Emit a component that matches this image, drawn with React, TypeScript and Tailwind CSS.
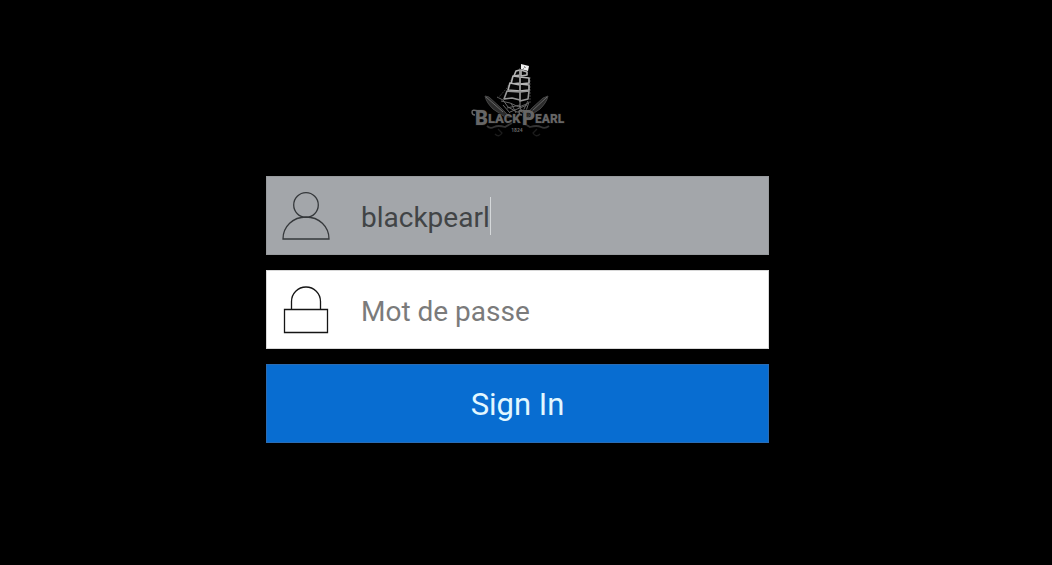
import { useState } from "react";

function Logo() {
  return (
    <svg viewBox="0 0 120 90" className="h-[90px] w-[120px]" role="img" aria-label="Black Pearl">
      {/* crossed sabres */}
      <g stroke="#505050" fill="#2c2c2c" strokeWidth="0.8">
        <path d="M27 41c1 5 4 9 8 13l12 8h5l-9-9-12-11z" />
        <path d="M90 41c-1 5-4 9-8 13l-12 8h-5l9-9 11-10z" />
        <path d="M28 42l17 15M89 42L73 57" stroke="#777" />
      </g>
      <g fill="none" stroke="#333" strokeWidth="1.8">
        <path d="M29 71q3 3 7 1t11 0l7-4M91 71q-4 3-8 1t-11 0l-7-4" />
        <path d="M37 79q4 4 7-1l-4-4M82 79q-4 4-7-1l4-4" stroke="#1c1c1c" strokeWidth="1.4" />
      </g>
      {/* hull and rigging */}
      <g fill="none" stroke="#666" strokeWidth="1">
        <path d="M39 42l6 3 5 7 9 5 9-1 3-9M43 46l9 2 9 4 10-4M45 50l7 8M53 48l5 10M61 51l4 7M70 46l-6 12M49 53l13-3M52 57l17-7" />
        <path d="M40 43l9-10 6-12 8-9M72 22v26" stroke="#3f3f3f" strokeDasharray="2 1" />
      </g>
      {/* sails */}
      <g fill="#060606" stroke="#b4b4b4" strokeWidth="1.6" strokeLinejoin="round">
        <path d="M58 16l4-1v5l-6 1zM63 15l6 2v3l-6 1z" />
        <path d="M55 21l7 1v6l-9 1zM62 22l9 1v5l-9 1z" />
        <path d="M52 28l10 2v6l-12-1zM62 29l9 1v5l-9 1z" />
        <path d="M49 36l13 1v8l-8-2-8 1zM62 37l9-1-1 8-8 2z" stroke="#969696" />
      </g>
      <path d="M63 9l8 2-1 5-7-2z" fill="#eee" />
      <path d="M66 11l2 2M65 14l2-2" stroke="#777" strokeWidth="0.7" />
      <path d="M62 14v38" stroke="#8a8a8a" strokeWidth="1" />
      {/* lettering */}
      <g
        className="font-['Roboto',sans-serif] font-black"
        fill="#666"
        stroke="#101010"
        strokeWidth="1"
        paintOrder="stroke"
      >
        <text x="17" y="70" fontSize="20">
          B<tspan fontSize="13" dy="-2">LACK</tspan>
        </text>
        <text x="64" y="70" fontSize="20">
          P<tspan fontSize="12" dy="-2">EARL</tspan>
        </text>
      </g>
      <path d="M20 56q-6-2-6 1t3 3M66 56q-5-2-5 1t3 3" fill="none" stroke="#666" strokeWidth="1.4" />
      <text x="59" y="77" fontSize="5" textAnchor="middle" fill="#666" className="font-['Roboto',sans-serif] font-bold">
        1824
      </text>
    </svg>
  );
}

function UserIcon() {
  return (
    <svg viewBox="0 0 48 48" className="size-12 shrink-0" fill="none" stroke="#35383b" strokeWidth="1.3" aria-hidden="true">
      <circle cx="24" cy="13" r="12.300" />
      <path d="M1 47C1 34.500 11 25 24 25S47 34.500 47 47z" />
    </svg>
  );
}

function LockIcon() {
  return (
    <svg viewBox="0 0 48 48" className="size-12 shrink-0" fill="none" stroke="#151515" strokeWidth="1.3" aria-hidden="true">
      <path d="M9.500 23.500V15.500a14.500 14.500 0 0 1 29 0v8" />
      <path d="M2.500 23.500h43v23h-43z" />
    </svg>
  );
}

export default function App() {
  const [user, setUser] = useState("blackpearl");
  const [password, setPassword] = useState("");

  return (
    <main className="flex min-h-screen flex-col items-center bg-black pt-[55px] pr-[17px] pb-8 font-['Roboto',sans-serif]">
      <Logo />
      <form className="mt-[31px] flex w-full max-w-[503px] flex-col gap-[15px]" onSubmit={(e) => e.preventDefault()}>
        <label className="flex h-[79px] items-center border border-[#989b9e] bg-[#a3a6aa] pl-[15px]">
          <UserIcon />
          <input
            aria-label="Username"
            className="ml-[31px] field-sizing-content min-w-0 bg-transparent pt-1 text-[28px] text-[#414446] caret-transparent outline-none"
            value={user}
            onChange={(e) => setUser(e.target.value)}
          />
          <span className="h-[38px] w-px bg-[#d5d8da]" aria-hidden="true" />
        </label>
        <label className="flex h-[79px] items-center border border-[#d8d8d8] bg-white pl-[15px]">
          <LockIcon />
          <input
            type="password"
            aria-label="Mot de passe"
            placeholder="Mot de passe"
            className="ml-[31px] min-w-0 flex-1 bg-transparent pt-1 text-[28px] text-[#414446] outline-none placeholder:text-[#7b7b7b]"
            value={password}
            onChange={(e) => setPassword(e.target.value)}
          />
        </label>
        <button type="submit" className="h-[79px] border border-[#2a6cb4] bg-[#086dd1] pt-1 text-[31px] text-[#e2f7ff]">
          Sign In
        </button>
      </form>
    </main>
  );
}
